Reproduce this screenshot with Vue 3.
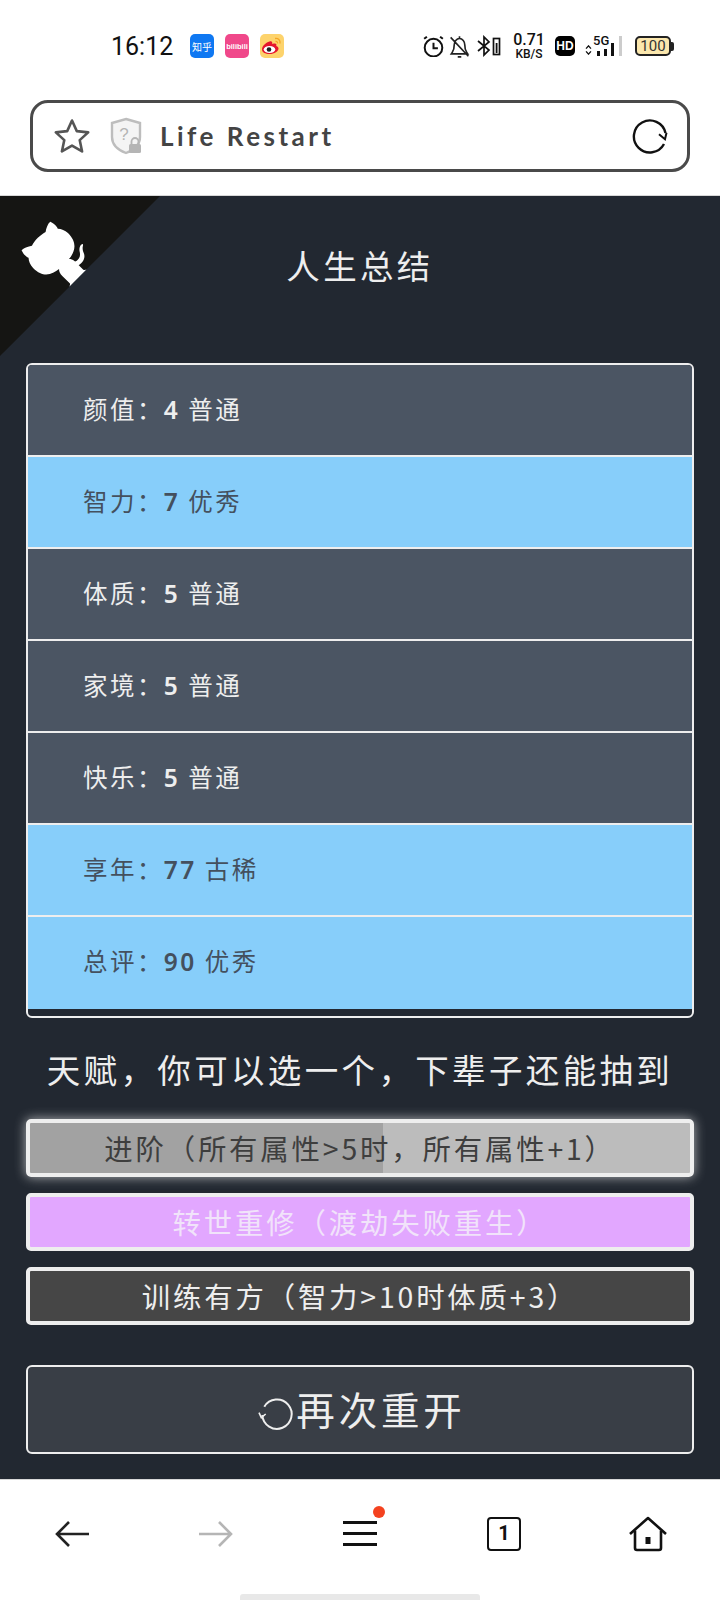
<script setup>
const stats = [
  { label: "颜值：", value: "4", grade: "普通", hit: false },
  { label: "智力：", value: "7", grade: "优秀", hit: true },
  { label: "体质：", value: "5", grade: "普通", hit: false },
  { label: "家境：", value: "5", grade: "普通", hit: false },
  { label: "快乐：", value: "5", grade: "普通", hit: false },
  { label: "享年：", value: "77", grade: "古稀", hit: true },
  { label: "总评：", value: "90", grade: "优秀", hit: true },
];

const talents = [
  { text: "进阶（所有属性>5时，所有属性+1）", kind: "selected" },
  { text: "转世重修（渡劫失败重生）", kind: "pink" },
  { text: "训练有方（智力>10时体质+3）", kind: "grey" },
];
</script>

<template>
  <div class="phone">
    <div class="status">
      <span class="time">16:12</span>
      <span class="app zhihu">知乎</span>
      <span class="app bili">bilibili</span>
      <span class="app weibo">
        <svg width="24" height="24" viewBox="0 0 24 24">
          <path d="M9.500 7.500c-4 1.200-7.500 4.500-7.500 8 0 3 3.500 4.500 7.500 4.500 5 0 9-2.700 9-5.500 0-1.600-1.500-2.200-2.300-2.500.6-1.700.2-3-2.500-2.400l-1.500.4c.3-2.200-.4-3.200-2.700-2.500z" fill="#e6162d" />
          <ellipse cx="9.500" cy="15.500" rx="5.800" ry="3.500" fill="#fff" />
          <circle cx="9" cy="15.500" r="2.300" fill="#222" />
          <path d="M15 4.500c3.200-.6 5.500 1.700 5 5M15.500 7.500c1.500-.2 2.200.6 2 2" fill="none" stroke="#f5a623" stroke-width="1.300" />
        </svg>
      </span>
      <span class="grow"></span>
      <svg class="sicon alarm" width="21" height="22" viewBox="1.500 .5 19 20" fill="none" stroke="#111" stroke-width="1.800">
        <circle cx="11" cy="12" r="8" />
        <path d="M11 7.500V12.500H15M2.500 4 5 2M19.500 4 17 2" />
      </svg>
      <svg class="sicon bell" width="21" height="23" viewBox="2.500 1.500 17 19.500" fill="none" stroke="#222" stroke-width="1.400">
        <path d="M5 16c1.500-2 1.500-3 1.500-6 0-3 2-5.500 4.500-5.500s4.500 2.500 4.500 5.500c0 3 0 4 1.500 6l1 1.500H4zM11 2.500v2M9.500 20h3M3.500 3.500l15 16" />
      </svg>
      <svg class="sicon bt" width="26" height="22" viewBox="0 0 26 22" fill="none" stroke="#111" stroke-width="1.700">
        <path d="M2 6l11 9-5 5V2l5 5-11 9" />
        <rect x="17.500" y="3.500" width="6" height="16" />
        <rect x="19.700" y="8" width="1.800" height="10" fill="#111" stroke="none" />
      </svg>
      <span class="speed"><b>0.71</b><i>KB/S</i></span>
      <span class="hd">HD</span>
      <span class="net">
        <span class="updown">
          <svg width="7" height="10" viewBox="0 0 7 11" fill="none" stroke="#111" stroke-width="1.500"><path d="M.8 4 3.500 1 6.200 4M.8 7 3.500 10 6.200 7" /></svg>
        </span>
        <span class="five">5G</span>
        <span class="bars"><i class="b1"></i><i class="b2"></i><i class="b3"></i><i class="b4"></i></span>
      </span>
      <span class="batt"><span class="batt-body">100</span><span class="batt-tip"></span></span>
    </div>

    <div class="addr-wrap">
      <div class="addr">
        <svg width="38" height="38" viewBox="0 0 38 38" fill="none" stroke="#555" stroke-width="2.600" stroke-linejoin="round">
          <path d="M19 3.500l4.800 10.600 11.400 1.300-8.500 7.700 2.400 11.300L19 28.600 8.900 34.400l2.400-11.300-8.500-7.700 11.400-1.300z" />
        </svg>
        <span class="shield">
          <svg width="34" height="38" viewBox="0 0 34 38">
            <path d="M17 2 31 6v14c0 8-6 13-14 16C9 33 3 28 3 20V6z" fill="#f4f4f4" stroke="#bdbdbd" stroke-width="2.400" />
            <text x="15" y="23" class="shield-q">?</text>
            <rect x="20" y="27" width="12" height="9" rx="1.500" fill="#b5b5b5" />
            <path d="M22.500 27v-2.500a3.500 3.500 0 0 1 7 0V27" fill="none" stroke="#b5b5b5" stroke-width="1.800" />
          </svg>
        </span>
        <span class="addr-title">Life Restart</span>
        <span class="grow"></span>
        <svg width="36" height="36" viewBox="0 0 36 36" fill="none" stroke="#111" stroke-width="2.400">
          <path d="M33.500 15A16 16 0 1 0 32 26" />
          <path d="M27 16.300 33 21.300 34.500 14.700" stroke-width="2" />
        </svg>
      </div>
    </div>

    <main class="game">
      <svg class="corner" width="160" height="160" viewBox="0 0 250 250" aria-hidden="true">
        <path d="M0,0 L115,115 L130,115 L142,142 L250,250 L250,0 Z" fill="#151513" />
        <path d="M128.300,109 C113.800,99.700 119,89.600 119,89.600 C122,82.700 120.500,78.600 120.500,78.600 C119.200,72 123.400,76.300 123.400,76.300 C127.300,80.900 125.500,87.300 125.500,87.300 C122.900,97.600 130.600,101.900 134.400,103.200" fill="#fff" />
        <path d="M115,115 C114.900,115.100 118.700,116.500 119.800,115.400 L133.700,101.600 C136.900,99.200 139.900,98.400 142.200,98.600 C133.800,88 127.500,74.400 143.800,58 C148.500,53.400 154,51.200 159.700,51 C160.300,49.400 163.200,43.600 171.400,40.100 C171.400,40.100 176.100,42.500 178.800,56.200 C183.100,58.600 187.200,61.800 190.900,65.400 C194.500,69 197.700,73.200 200.100,77.600 C213.800,80.200 216.300,84.900 216.300,84.900 C212.700,93.100 206.900,96 205.400,96.600 C205.100,102.400 203,107.800 198.300,112.500 C181.900,128.900 168.300,122.500 157.700,114.100 C157.900,116.900 156.700,120.900 152.700,124.900 L141,136.500 C139.800,137.700 141.600,141.900 141.800,141.800 Z" fill="#fff" />
      </svg>

      <h1 class="title">人生总结</h1>

      <ul class="stats">
        <li v-for="row in stats" :key="row.label" class="stat" :class="{ hit: row.hit }">
          {{ row.label }}<b>{{ row.value }}</b> {{ row.grade }}
        </li>
      </ul>

      <h2 class="tip">天赋，你可以选一个，下辈子还能抽到</h2>

      <div class="talents">
        <button v-for="t in talents" :key="t.text" class="talent" :class="t.kind">{{ t.text }}</button>
      </div>

      <button class="again">
        <svg width="34" height="32" viewBox="0 0 34 32" fill="none" stroke="#eee" stroke-width="2">
          <path d="M5.300 10.700A14.700 14.700 0 1 1 3.300 19" />
          <path d="M0 16.700 2.300 21.700 6.700 18" stroke-width="1.600" />
        </svg>
        <span>再次重开</span>
      </button>
    </main>

    <nav class="bottom">
      <div class="tab">
        <svg width="36" height="28" viewBox="0 0 36 28" fill="none" stroke="#222" stroke-width="2.600">
          <path d="M35 14H3M15 2 3 14l12 12" />
        </svg>
      </div>
      <div class="tab">
        <svg width="36" height="28" viewBox="0 0 36 28" fill="none" stroke="#b5b5b5" stroke-width="2.600">
          <path d="M1 14h32M21 2l12 12-12 12" />
        </svg>
      </div>
      <div class="tab">
        <span class="menu"><i></i><i></i><i></i><em></em></span>
      </div>
      <div class="tab"><span class="count">1</span></div>
      <div class="tab">
        <svg width="40" height="36" viewBox="0 0 40 36" fill="none" stroke="#111" stroke-width="2.600" stroke-linejoin="round">
          <path d="M2 18 20 2l18 16" />
          <path d="M7 14.500V32a2 2 0 0 0 2 2h22a2 2 0 0 0 2-2V14.500" />
          <rect x="17.500" y="21" width="5" height="7" fill="#111" stroke="none" />
        </svg>
      </div>
    </nav>
    <div class="indicator"></div>
  </div>
</template>

<style>
body {
  margin: 0;
  background: #fff;
}
</style>

<style scoped>
* {
  box-sizing: border-box;
}

.phone {
  width: 720px;
  height: 1600px;
  overflow: hidden;
  display: flex;
  flex-direction: column;
  font-family: "Noto Sans CJK SC", "Noto Sans", sans-serif;
}

.grow {
  flex: 1;
}

.status {
  height: 92px;
  padding: 0 46px 0 111px;
  display: flex;
  align-items: center;
  flex-shrink: 0;
}

.time {
  width: 79px;
  font-family: Roboto, sans-serif;
  font-size: 25px;
  color: #111;
}

.app {
  width: 24px;
  height: 24px;
  margin-right: 11px;
  border-radius: 5px;
  display: flex;
  align-items: center;
  justify-content: center;
  overflow: hidden;
}

.zhihu {
  background: #0f78f2;
  color: #fff;
  font-size: 10px;
}

.bili {
  background: #f0488a;
  color: #fff;
  font-family: "Liberation Sans", sans-serif;
  font-size: 7.500px;
  font-weight: 700;
}

.weibo {
  background: #fdd36c;
}

.sicon {
  flex-shrink: 0;
}

.alarm {
  margin-right: 5px;
}

.bell {
  margin-right: 6px;
}

.bt {
  margin-right: 5px;
}

.speed {
  width: 32px;
  margin: 0 10px 0 6px;
  display: flex;
  flex-direction: column;
  align-items: center;
  color: #111;
  font-family: Roboto, sans-serif;
  line-height: 1;
}

.speed b {
  font-size: 16px;
  font-weight: 500;
}

.speed i {
  font-size: 12px;
  font-style: normal;
  font-weight: 500;
}

.hd {
  width: 20px;
  height: 20px;
  margin-right: 10px;
  border-radius: 5px;
  background: #000;
  color: #fff;
  font-family: "Liberation Sans", sans-serif;
  font-size: 12px;
  font-weight: 700;
  display: flex;
  align-items: center;
  justify-content: center;
}

.net {
  width: 38px;
  height: 20px;
  margin-right: 12px;
  position: relative;
}

.updown {
  position: absolute;
  left: 0;
  top: 0;
}

.five {
  position: absolute;
  left: 8px;
  top: -3px;
  font-family: Roboto, sans-serif;
  font-size: 13px;
  font-weight: 500;
  color: #111;
}

.bars {
  position: absolute;
  inset: 0;
}

.bars i {
  position: absolute;
  bottom: 0;
  width: 3px;
  background: #111;
}

.bars .b1 {
  left: 12px;
  height: 5px;
}

.bars .b2 {
  left: 19px;
  height: 7px;
}

.bars .b3 {
  left: 26px;
  height: 13px;
}

.bars .b4 {
  left: 34px;
  height: 20px;
  background: #ccc;
}

.batt {
  display: flex;
  align-items: center;
}

.batt-body {
  width: 36px;
  height: 20px;
  border: 2px solid #222;
  border-radius: 5px;
  background: #fbe7ad;
  color: #333;
  font-family: Roboto, sans-serif;
  font-size: 15px;
  line-height: 16px;
  text-align: center;
}

.batt-tip {
  width: 3px;
  height: 9px;
  background: #222;
  border-radius: 0 2px 2px 0;
}

.addr-wrap {
  height: 104px;
  padding: 8px 30px 24px;
  flex-shrink: 0;
  border-bottom: 1px solid #d8d8d8;
}

.addr {
  height: 72px;
  padding: 0 19px 0 20px;
  border: 3px solid #4a4a4a;
  border-radius: 18px;
  display: flex;
  align-items: center;
}

.shield {
  margin-left: 18px;
  display: flex;
}

.shield-q {
  font-family: "Liberation Sans", sans-serif;
  font-size: 17px;
  fill: #b5b5b5;
  text-anchor: middle;
}

.addr-title {
  margin-left: 17px;
  font-family: Lato, sans-serif;
  font-size: 26px;
  font-weight: 700;
  letter-spacing: 3.500px;
  color: #444;
}

.game {
  position: relative;
  height: 1283px;
  flex-shrink: 0;
  padding: 0 26px;
  background: #222831;
  display: flex;
  flex-direction: column;
  color: #eee;
}

.corner {
  position: absolute;
  left: 0;
  top: 0;
  transform: scaleX(-1);
}

.title {
  height: 167px;
  margin: 0;
  padding-top: 42px;
  text-align: center;
  font-size: 33.500px;
  font-weight: 400;
  letter-spacing: 3.350px;
  line-height: 54px;
}

.stats {
  height: 655px;
  margin: 0;
  padding: 0;
  list-style: none;
  border: 2px solid #eee;
  border-radius: 6px;
  overflow: hidden;
  flex-shrink: 0;
}

.stat {
  height: 92px;
  padding-left: 55px;
  border-bottom: 2px solid #eee;
  background: #4b5563;
  font-size: 24.500px;
  letter-spacing: 2.450px;
  line-height: 87px;
}

.stat b {
  font-family: "Noto Sans", sans-serif;
  font-weight: 600;
}

.stat.hit {
  background: #87cefa;
  color: #44505e;
}

.stat:last-child {
  border-bottom: 0;
}

.tip {
  height: 101px;
  margin: 0;
  text-align: center;
  font-size: 33.500px;
  font-weight: 400;
  letter-spacing: 3.350px;
  line-height: 101px;
  white-space: nowrap;
}

.talents {
  display: flex;
  flex-direction: column;
  gap: 16px;
}

.talent {
  height: 58px;
  padding: 0 0 2px;
  border: 4px solid #eee;
  border-radius: 5px;
  font-family: inherit;
  font-size: 28.400px;
  letter-spacing: 2.840px;
  white-space: nowrap;
  color: #eee;
}

.talent.selected {
  background: linear-gradient(90deg, #a2a2a2 53.500%, #bcbcbc 53.500%);
  color: #3e3e3e;
  box-shadow: 0 0 12px rgba(238, 238, 238, 0.7);
}

.talent.pink {
  background: #e2a7ff;
  color: #f1e3fa;
}

.talent.grey {
  background: #464646;
}

.again {
  height: 89px;
  margin-top: 40px;
  padding: 0 0 4px 5px;
  border: 2px solid #eee;
  border-radius: 6px;
  background: #393e46;
  color: #eee;
  font-family: inherit;
  font-size: 38.500px;
  letter-spacing: 3.850px;
  display: flex;
  align-items: center;
  justify-content: center;
  gap: 3px;
}

.again svg {
  margin-top: 8px;
  overflow: visible;
}

.bottom {
  height: 115px;
  flex-shrink: 0;
  display: grid;
  grid-template-columns: repeat(5, 1fr);
  align-items: center;
  border-top: 1px solid #d8d8d8;
  padding-bottom: 7px;
}

.tab {
  display: flex;
  justify-content: center;
  align-items: center;
}

.menu {
  position: relative;
  width: 34px;
  height: 25px;
  display: flex;
  flex-direction: column;
  justify-content: space-between;
}

.menu i {
  height: 3px;
  background: #111;
}

.menu em {
  position: absolute;
  top: -15px;
  right: -8px;
  width: 12px;
  height: 12px;
  border-radius: 50%;
  background: #f4421f;
}

.count {
  width: 34px;
  height: 34px;
  border: 2.500px solid #111;
  border-radius: 4px;
  color: #111;
  font-family: Roboto, sans-serif;
  font-size: 20px;
  font-weight: 700;
  line-height: 29px;
  text-align: center;
}

.indicator {
  width: 240px;
  height: 6px;
  margin: 0 auto;
  flex-shrink: 0;
  border-radius: 3px 3px 0 0;
  background: #e8e8e8;
}
</style>
